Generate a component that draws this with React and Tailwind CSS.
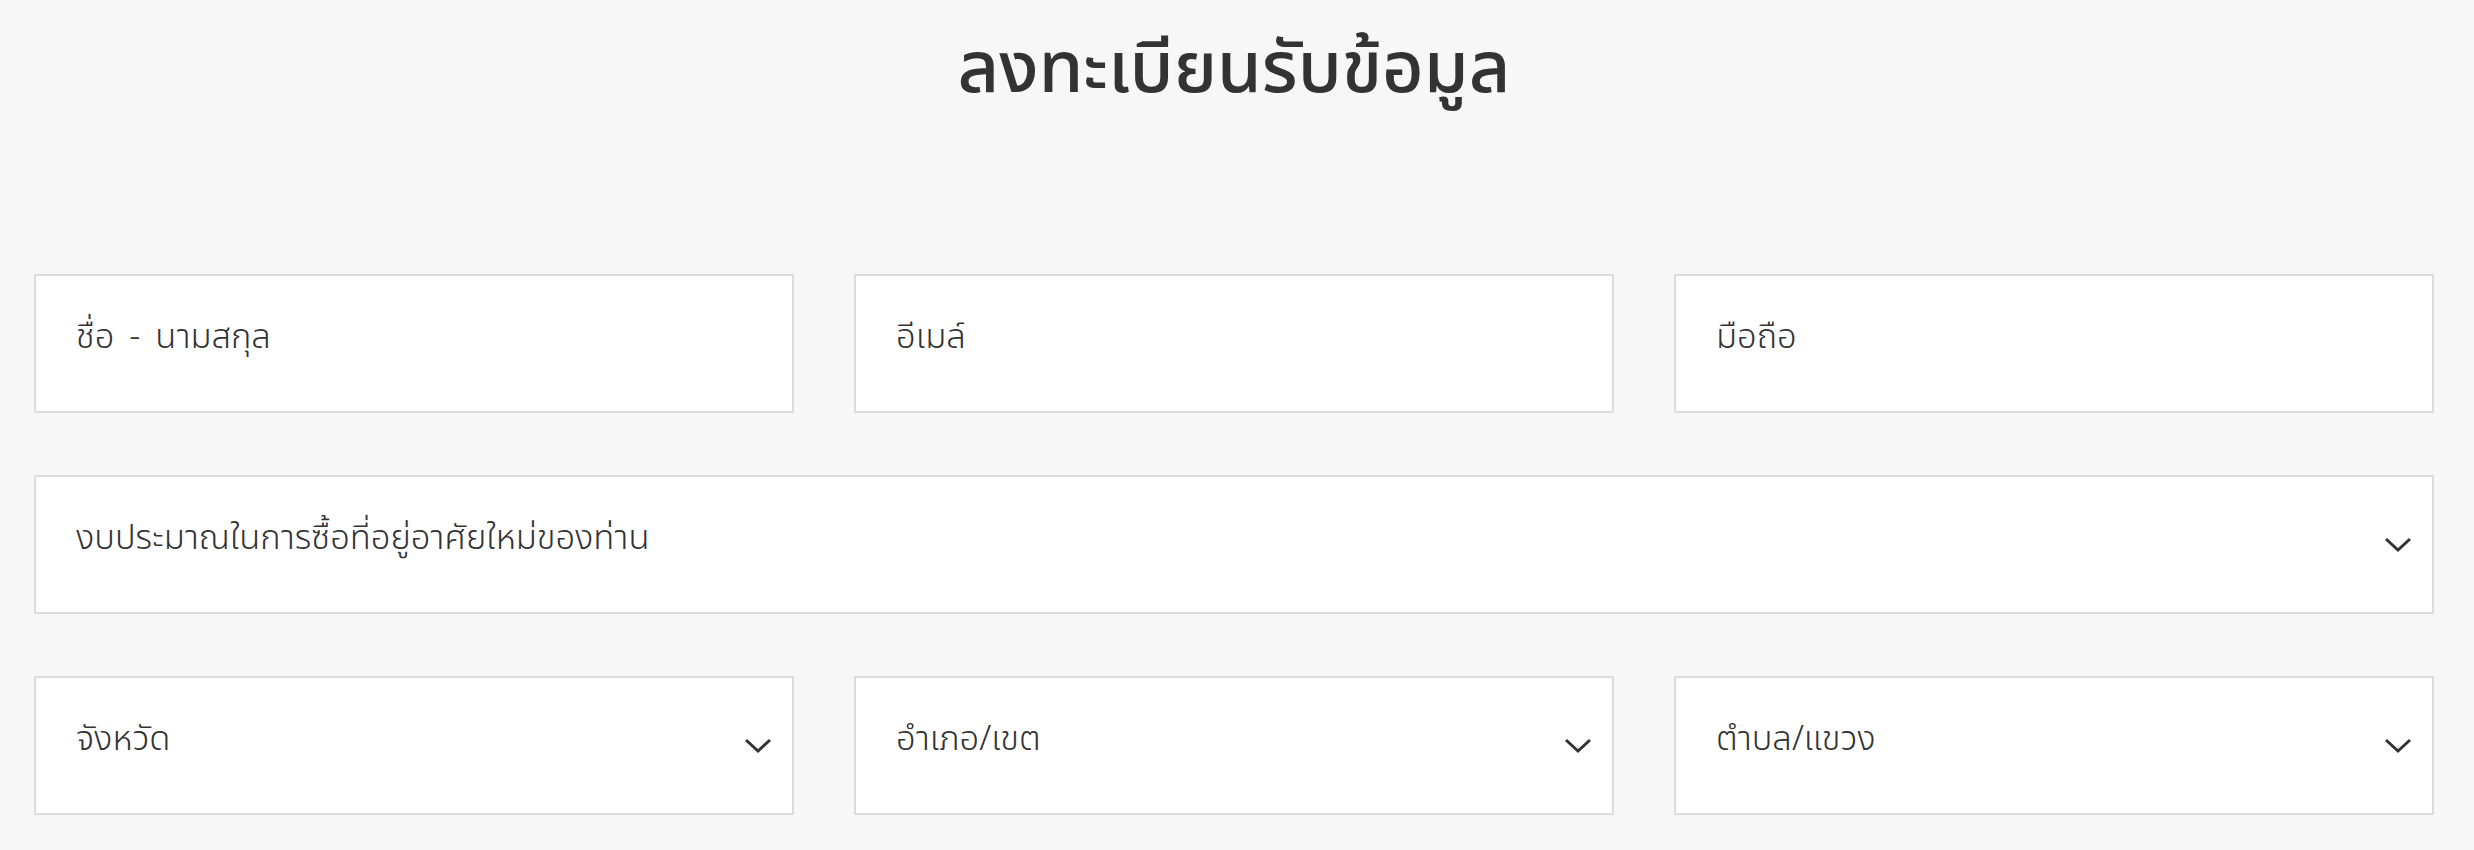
import React from "react";

const font = { fontFamily: '"Noto Sans Thai", "Noto Sans", "DejaVu Sans", sans-serif' };

function Chevron() {
  return (
    <svg width="28" height="16" viewBox="0 0 28 16" fill="none" className="shrink-0">
      <path d="M2 2 L14 13 L26 2" stroke="#333333" strokeWidth="3" strokeLinecap="butt" strokeLinejoin="miter" />
    </svg>
  );
}

function Field({ label, select, className = "" }) {
  return (
    <div
      className={`h-[139px] bg-white border-2 border-[#dcdcdc] flex items-center justify-between pl-[40px] pr-[20px] ${className}`}
    >
      <span className="text-[34.5px] font-light text-[#333333] leading-none -mt-[10px] whitespace-pre">{label}</span>
      {select && <Chevron />}
    </div>
  );
}

export default function App() {
  return (
    <div className="min-h-screen bg-[#f7f7f7] pl-[34px] pr-[40px]" style={font}>
      <h1 className="text-center text-[72px] font-medium text-[#333333] leading-none pt-[34px] h-[274px]">
        ลงทะเบียนรับข้อมูล
      </h1>
      <div className="grid grid-cols-3 gap-x-[60px] gap-y-[62px]">
        <Field
          label={
            <>
              ชื่อ<span className="mx-[6px]"> - </span>นามสกุล
            </>
          }
        />
        <Field label="อีเมล์" />
        <Field label="มือถือ" />
        <Field label="งบประมาณในการซื้อที่อยู่อาศัยใหม่ของท่าน" select className="col-span-3" />
        <Field label="จังหวัด" select />
        <Field label="อำเภอ/เขต" select />
        <Field label="ตำบล/แขวง" select />
      </div>
    </div>
  );
}
